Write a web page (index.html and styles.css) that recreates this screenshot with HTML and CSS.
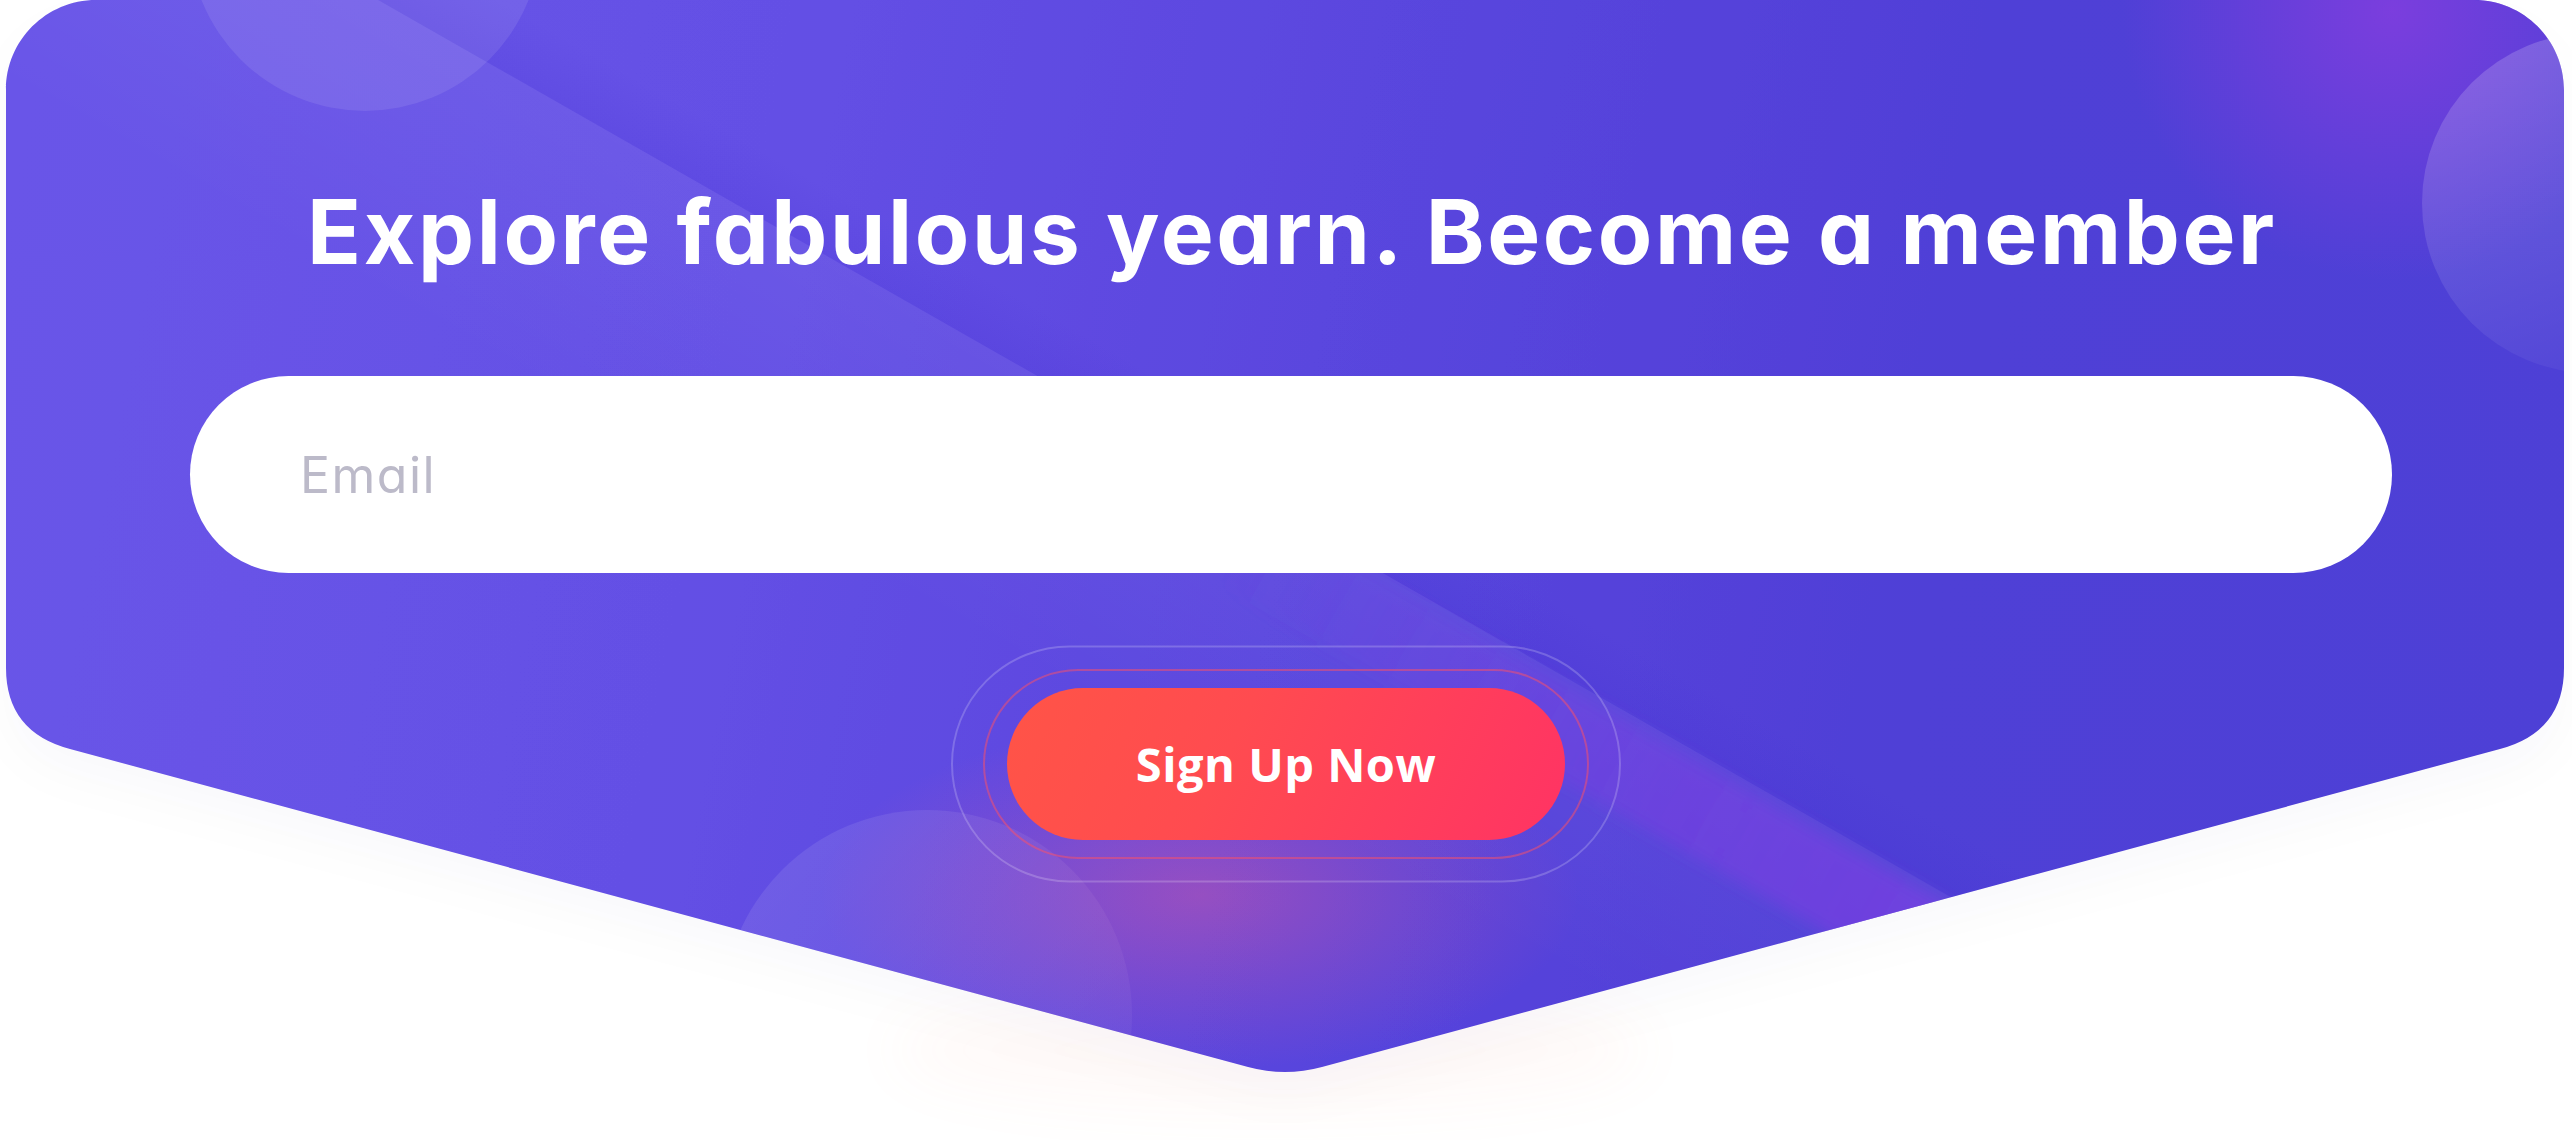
FILE: index.html
```html
<!DOCTYPE html>
<html lang="en">
<head>
<meta charset="utf-8">
<title>Become a member</title>
<link rel="stylesheet" href="styles.css">
</head>
<body>
<section class="cta">
  <svg class="cta-bg" width="2572" height="1140" viewBox="0 0 2572 1140" aria-hidden="true">
    <defs>
      <linearGradient id="g-base" gradientUnits="userSpaceOnUse" x1="0" y1="250" x2="2572" y2="750">
        <stop offset="0" stop-color="#6955e8"/>
        <stop offset="0.28" stop-color="#6450e5"/>
        <stop offset="0.5" stop-color="#5a46de"/>
        <stop offset="0.75" stop-color="#4f3fd6"/>
        <stop offset="1" stop-color="#4e3fd6"/>
      </linearGradient>
      <clipPath id="clip-shape">
        <path d="M 6 90 C 6 40.3 46.3 0 96 0 L 2474 0 C 2523.7 0 2564 40.3 2564 90 L 2564 668 Q 2564 732 2500 749 L 1322 1067 Q 1285 1077 1248 1067 L 70 749 Q 6 732 6 668 Z"/>
      </clipPath>
      <filter id="f-shadow" x="-5%" y="-5%" width="110%" height="130%">
        <feDropShadow dx="0" dy="24" stdDeviation="22" flood-color="#2a1f6b" flood-opacity="0.025"/>
      </filter>
      <filter id="f-blur" x="-50%" y="-50%" width="200%" height="200%">
        <feGaussianBlur stdDeviation="30"/>
      </filter>
      <filter id="f-soft" x="-20%" y="-50%" width="140%" height="200%">
        <feGaussianBlur stdDeviation="8"/>
      </filter>
      <linearGradient id="g-beam-light" x1="0" y1="0" x2="0" y2="1">
        <stop offset="0" stop-color="#ffffff" stop-opacity="0.05"/>
        <stop offset="1" stop-color="#ffffff" stop-opacity="0"/>
      </linearGradient>
      <linearGradient id="g-beam-dark" x1="0" y1="0" x2="0" y2="1">
        <stop offset="0" stop-color="#3d2ad0" stop-opacity="0"/>
        <stop offset="1" stop-color="#3d2ad0" stop-opacity="0.14"/>
      </linearGradient>
      <linearGradient id="g-beam-purple" x1="0" y1="0" x2="1" y2="0">
        <stop offset="0" stop-color="#7b3ee2" stop-opacity="0"/>
        <stop offset="0.45" stop-color="#7b3ee2" stop-opacity="0.5"/>
        <stop offset="1" stop-color="#7d3de3" stop-opacity="0.8"/>
      </linearGradient>
      <radialGradient id="g-corner" cx="0.5" cy="0.5" r="0.5">
        <stop offset="0" stop-color="#8a3de0" stop-opacity="0.75"/>
        <stop offset="1" stop-color="#8a3de0" stop-opacity="0"/>
      </radialGradient>
      <radialGradient id="g-glow" cx="0.5" cy="0.5" r="0.5">
        <stop offset="0" stop-color="#e85a9a" stop-opacity="0.42"/>
        <stop offset="0.55" stop-color="#e85a9a" stop-opacity="0.18"/>
        <stop offset="1" stop-color="#e85a9a" stop-opacity="0"/>
      </radialGradient>
      <linearGradient id="g-circle-right" x1="0" y1="0" x2="0.4" y2="1">
        <stop offset="0" stop-color="#ffffff" stop-opacity="0.2"/>
        <stop offset="1" stop-color="#ffffff" stop-opacity="0.04"/>
      </linearGradient>
      <linearGradient id="g-circle-bottom" x1="0" y1="0" x2="1" y2="1">
        <stop offset="0" stop-color="#ffffff" stop-opacity="0.1"/>
        <stop offset="1" stop-color="#ffffff" stop-opacity="0.03"/>
      </linearGradient>
    </defs>

    <ellipse cx="1270" cy="1050" rx="380" ry="60" fill="#ff8a70" opacity="0.045" filter="url(#f-blur)"/>

    <path d="M 6 90 C 6 40.3 46.3 0 96 0 L 2474 0 C 2523.7 0 2564 40.3 2564 90 L 2564 668 Q 2564 732 2500 749 L 1322 1067 Q 1285 1077 1248 1067 L 70 749 Q 6 732 6 668 Z" fill="url(#g-base)" filter="url(#f-shadow)"/>

    <g clip-path="url(#clip-shape)">
      <circle cx="2392" cy="10" r="270" fill="url(#g-corner)"/>
      <g transform="translate(478 57) rotate(29.7)">
        <rect x="-1400" y="-60" width="3600" height="60" fill="url(#g-beam-dark)"/>
        <rect x="-1400" y="0" width="3600" height="260" fill="url(#g-beam-light)"/>
        <rect x="900" y="8" width="1100" height="84" fill="url(#g-beam-purple)" filter="url(#f-soft)"/>
      </g>
      <circle cx="365" cy="-65" r="176" fill="#ffffff" fill-opacity="0.09"/>
      <circle cx="2592" cy="203" r="170" fill="url(#g-circle-right)"/>
      <circle cx="927" cy="1015" r="205" fill="url(#g-circle-bottom)"/>
      <ellipse cx="1200" cy="895" rx="380" ry="175" fill="url(#g-glow)"/>
    </g>
  </svg>

  <div class="cta-content">
    <h2 class="cta-title">Explore fabulous yearn. Become a member</h2>
    <form class="cta-form" onsubmit="return false">
      <input class="cta-email" type="email" placeholder="Email">
      <div class="cta-action">
        <span class="ring ring-outer"></span>
        <span class="ring ring-inner"></span>
        <button class="cta-btn" type="button">Sign Up Now</button>
      </div>
    </form>
  </div>
</section>
</body>
</html>
```

FILE: styles.css
```css
* {
  box-sizing: border-box;
}

html,
body {
  margin: 0;
  padding: 0;
  background: #ffffff;
}

body {
  width: 2572px;
  height: 1140px;
  overflow: hidden;
}

.cta {
  position: relative;
  width: 2572px;
  height: 1140px;
}

.cta-bg {
  position: absolute;
  top: 0;
  left: 0;
  display: block;
}

.cta-content {
  position: relative;
  display: flex;
  flex-direction: column;
  align-items: center;
  padding-top: 179px;
}

.cta-title {
  margin: 0 0 0 12px;
  font-family: Inter, "Noto Sans", sans-serif;
  font-feature-settings: "cv11" 1;
  font-weight: 700;
  font-size: 89px;
  line-height: 106px;
  letter-spacing: 2.6px;
  color: #ffffff;
  white-space: nowrap;
}

.cta-form {
  display: flex;
  flex-direction: column;
  align-items: center;
  margin: 91px 0 0;
}

.cta-email {
  display: block;
  width: 2202px;
  height: 197px;
  margin-left: 10px;
  padding: 0 0 0 110px;
  border: 0;
  border-radius: 99px;
  background: #ffffff;
  outline: none;
  font-family: Inter, "Noto Sans", sans-serif;
  font-feature-settings: "cv11" 1;
  font-size: 50px;
  font-weight: 400;
  letter-spacing: 1.5px;
  color: #3a3850;
}

.cta-email::placeholder {
  color: #bcbac9;
  opacity: 1;
}

.cta-action {
  position: relative;
  margin-top: 115px;
}

.ring {
  position: absolute;
  left: 50%;
  top: 50%;
  transform: translate(-50%, -50%);
  border-radius: 999px;
  pointer-events: none;
}

.ring-outer {
  width: 670px;
  height: 237px;
  border: 2px solid rgba(255, 255, 255, 0.2);
}

.ring-inner {
  width: 606px;
  height: 190px;
  border: 2px solid rgba(255, 80, 100, 0.5);
}

.cta-btn {
  position: relative;
  display: block;
  width: 558px;
  height: 152px;
  padding: 0;
  border: 0;
  border-radius: 76px;
  background: linear-gradient(115deg, #ff5447 0%, #ff4b50 40%, #ff3364 100%);
  color: #ffffff;
  font-family: "Open Sans", "Noto Sans", sans-serif;
  font-weight: 700;
  font-size: 47px;
  letter-spacing: 0.5px;
  cursor: pointer;
}
```
